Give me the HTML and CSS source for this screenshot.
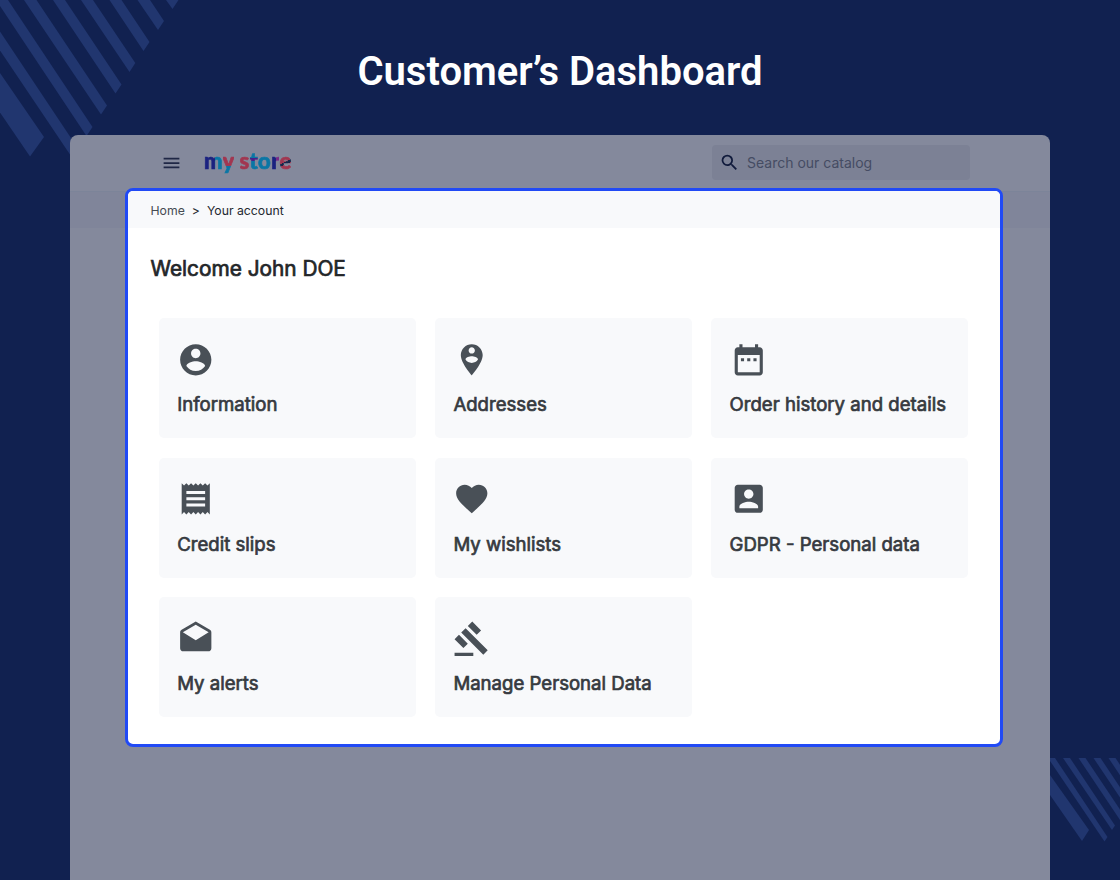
FILE: index.html
```html
<!DOCTYPE html>
<html lang="en">
  <head>
    <meta charset="UTF-8" />
    <meta name="viewport" content="width=device-width, initial-scale=1.0" />
    <title>Customer's Dashboard</title>
    <link rel="stylesheet" href="styles.css">
  </head>
  <body>
    <svg class="stripes stripes-top" width="180" height="160" viewBox="0 0 180 160">
      <path d="M0 73l44 64-14 19.500L0 112.500z" />
      <path d="M0 31.500l78 117-6 9L0 50.500z" />
      <path d="M-4 0H8l84.500 127-6 9z" />
      <path d="M24 0h12.500L107 105.500l-6 9z" />
      <path d="M53 0h12l56.500 84.500-6 9z" />
      <path d="M81 0h12l42.300 63-5.800 9z" />
      <path d="M109.500 0h12l28 42-6 9z" />
      <path d="M137.500 0h12.500l14 21-6 9z" />
      <path d="M166 0h12.500l-6 9z" />
    </svg>
    <svg class="stripes stripes-bottom" width="70" height="84" viewBox="0 0 70 84">
      <path d="M0 17l39 55-7 11L0 37z" />
      <path d="M-2 0h7l52.500 79-3 4.500z" />
      <path d="M13 0h7l45 67.500-3 4.500z" />
      <path d="M28.500 0h7L85 74l-7 0z" />
      <path d="M43.500 0h7L100 74l-7 0z" />
      <path d="M58.500 0h7L115 74l-7 0z" />
    </svg>

    <h1 class="page-title">Customer’s Dashboard</h1>

    <div class="window">
      <header>
        <svg class="menu-icon" viewBox="0 0 24 24"><path d="M3 18h18v-2H3v2zm0-5h18v-2H3v2zm0-7v2h18V6H3z" /></svg>
        <div class="logo"><span class="m">m</span><span class="y">y</span> <span class="s">s</span><span class="t">t</span><span class="o">o</span><span class="r">r</span><span class="e">e</span></div>
        <div class="search">
          <svg viewBox="0 0 24 24"><path d="M15.500 14h-.79l-.28-.27A6.471 6.471 0 0 0 16 9.500 6.500 6.500 0 1 0 9.500 16c1.610 0 3.090-.59 4.230-1.570l.27.28v.79l5 4.990L20.490 19l-4.990-5zm-6 0C7.010 14 5 11.990 5 9.500S7.010 5 9.500 5 14 7.010 14 9.500 11.990 14 9.500 14z" /></svg>
          <span>Search our catalog</span>
        </div>
      </header>
      <div class="band"></div>

      <main class="account">
        <nav class="breadcrumb">
          <a>Home</a>
          <span class="sep">&gt;</span>
          <span>Your account</span>
        </nav>
        <h2>Welcome John DOE</h2>
        <div class="links">
          <a class="card">
            <svg viewBox="0 0 24 24"><path d="M12 2C6.480 2 2 6.480 2 12s4.480 10 10 10 10-4.480 10-10S17.520 2 12 2zm0 3c1.660 0 3 1.340 3 3s-1.340 3-3 3-3-1.340-3-3 1.340-3 3-3zm0 14.200c-2.500 0-4.710-1.280-6-3.220.03-1.990 4-3.080 6-3.080 1.990 0 5.970 1.090 6 3.080-1.290 1.940-3.500 3.220-6 3.220z" /></svg>
            <span>Information</span>
          </a>
          <a class="card">
            <svg viewBox="0 0 24 24"><path d="M12 2C8.140 2 5 5.140 5 9c0 5.250 7 13 7 13s7-7.750 7-13c0-3.860-3.140-7-7-7zm0 2c1.100 0 2 .9 2 2s-.9 2-2 2-2-.9-2-2 .9-2 2-2zm0 10c-1.670 0-3.140-.85-4-2.150.02-1.320 2.670-2.050 4-2.050s3.980.73 4 2.050c-.86 1.300-2.330 2.150-4 2.150z" /></svg>
            <span>Addresses</span>
          </a>
          <a class="card">
            <svg viewBox="0 0 24 24"><path d="M9 11H7v2h2v-2zm4 0h-2v2h2v-2zm4 0h-2v2h2v-2zm2-7h-1V2h-2v2H8V2H6v2H5c-1.110 0-1.990.9-1.990 2L3 20c0 1.100.89 2 2 2h14c1.100 0 2-.9 2-2V6c0-1.100-.9-2-2-2zm0 16H5V9h14v11z" /></svg>
            <span>Order history and details</span>
          </a>
          <a class="card">
            <svg viewBox="0 0 24 24"><path d="M18 17H6v-2h12v2zm0-4H6v-2h12v2zm0-4H6V7h12v2zM3 22l1.500-1.500L6 22l1.500-1.500L9 22l1.500-1.500L12 22l1.500-1.500L15 22l1.500-1.500L18 22l1.500-1.500L21 22V2l-1.500 1.500L18 2l-1.500 1.500L15 2l-1.500 1.500L12 2l-1.500 1.500L9 2 7.500 3.500 6 2 4.500 3.500 3 2v20z" /></svg>
            <span>Credit slips</span>
          </a>
          <a class="card">
            <svg viewBox="0 0 24 24"><path d="M12 21.350l-1.450-1.320C5.400 15.360 2 12.280 2 8.500 2 5.420 4.420 3 7.500 3c1.740 0 3.410.81 4.500 2.090C13.090 3.810 14.760 3 16.500 3 19.580 3 22 5.420 22 8.500c0 3.780-3.400 6.860-8.550 11.540L12 21.350z" /></svg>
            <span>My wishlists</span>
          </a>
          <a class="card">
            <svg viewBox="0 0 24 24"><path d="M3 5v14c0 1.100.89 2 2 2h14c1.100 0 2-.9 2-2V5c0-1.100-.9-2-2-2H5c-1.110 0-2 .9-2 2zm12 4c0 1.660-1.340 3-3 3s-3-1.340-3-3 1.340-3 3-3 3 1.340 3 3zm-9 8c0-2 4-3.100 6-3.100s6 1.100 6 3.100v1H6v-1z" /></svg>
            <span>GDPR - Personal data</span>
          </a>
          <a class="card">
            <svg viewBox="0 0 24 24"><path d="M21.990 8c0-.72-.37-1.350-.94-1.700L12 1 2.950 6.300C2.380 6.650 2 7.280 2 8v10c0 1.100.9 2 2 2h16c1.100 0 2-.9 2-2l-.01-10zM12 13L3.740 7.840 12 3l8.260 4.840L12 13z" /></svg>
            <span>My alerts</span>
          </a>
          <a class="card">
            <svg viewBox="0 0 24 24"><path d="M1 21h12v2H1v-2zM5.245 8.070l2.830-2.827 14.140 14.142-2.828 2.828L5.245 8.070zM12.317 1l5.657 5.656-2.830 2.830-5.654-5.660L12.317 1zM3.825 9.485l5.657 5.657-2.828 2.828-5.657-5.657 2.828-2.828z" /></svg>
            <span>Manage Personal Data</span>
          </a>
        </div>
      </main>
    </div>
  </body>
</html>
```
FILE: styles.css
```css
* {
  box-sizing: border-box;
}
body {
  position: relative;
  height: 880px;
  margin: 0;
  overflow: hidden;
  background-color: #112150;
  font-family: Inter, sans-serif;
}
.stripes {
  position: absolute;
  fill: #21366f;
}
.stripes-top {
  top: 0;
  left: 0;
}
.stripes-bottom {
  top: 758px;
  right: 0;
}
.page-title {
  height: 135px;
  margin: 0;
  padding-top: 48px;
  color: white;
  font-family: Roboto, sans-serif;
  font-size: 40px;
  font-weight: 600;
  line-height: 47px;
  text-align: center;
}
.window {
  position: relative;
  width: 980px;
  height: 745px;
  margin: 0 auto;
  background-color: #84899c;
  border-radius: 8px 8px 0 0;
}
header {
  display: flex;
  align-items: center;
  height: 57px;
  padding: 0 80px 0 91px;
  border-bottom: 1px solid #7c8499;
}
.menu-icon {
  width: 21px;
  height: 22px;
  fill: #1f2745;
}
.logo {
  margin-left: 22px;
  padding-bottom: 5px;
  font-family: Lato, sans-serif;
  font-size: 22px;
  font-weight: 900;
  line-height: 28px;
  letter-spacing: 0.300px;
}
.logo span {
  color: transparent;
  background-clip: text;
  -webkit-background-clip: text;
  -webkit-text-stroke: 0.700px transparent;
}
.logo .m {
  background-image: linear-gradient(90deg, #1b2280 60%, #0a76a5 60%);
}
.logo .y {
  background-image: linear-gradient(180deg, #a13650 70%, #0a76a5 70%);
}
.logo .s {
  background-image: linear-gradient(#a13650, #a13650);
}
.logo .t {
  background-image: linear-gradient(180deg, #0a76a5 42%, #4a2088 42%, #4a2088 52%, #0a76a5 52%);
}
.logo .o {
  background-image: linear-gradient(#0a76a5, #0a76a5);
}
.logo .r {
  background-image: linear-gradient(90deg, #1b2280 60%, #7a2a88 60%);
}
.logo .e {
  background-image: linear-gradient(155deg, #a13650 54%, #16264a 54%, #16264a 62%, #a13650 62%);
}
.search {
  display: flex;
  align-items: center;
  width: 258px;
  height: 35px;
  margin: 0 0 1px auto;
  padding-left: 7px;
  background-color: #7c8195;
  border-radius: 4px;
  color: #454c63;
  font-size: 14px;
}
.search svg {
  width: 21px;
  height: 21px;
  margin-right: 7px;
  fill: #111b3c;
}
.band {
  height: 36px;
  background-color: #80859a;
}
.account {
  width: 878px;
  height: 559px;
  margin: -40px 0 0 55px;
  overflow: hidden;
  background-color: white;
  border: 3px solid #214af5;
  border-radius: 8px;
}
.breadcrumb {
  display: flex;
  align-items: center;
  height: 37px;
  padding: 1px 0 0 22.500px;
  background-color: #f8f9fb;
  color: #232830;
  font-size: 12.250px;
}
.breadcrumb a {
  color: #454b52;
}
.breadcrumb .sep {
  margin: 0 7px;
}
h2 {
  margin: 27px 0 0 22.500px;
  color: #232629;
  font-size: 20.800px;
  font-weight: 400;
  line-height: 28px;
  -webkit-text-stroke: 0.700px;
}
.links {
  display: grid;
  grid-template-columns: repeat(3, 257.200px);
  grid-auto-rows: 120px;
  gap: 19.500px 19px;
  padding: 35px 0 0 30.700px;
}
.card {
  display: flex;
  flex-direction: column;
  padding: 23px 0 0 18.500px;
  background-color: #f8f9fb;
  border-radius: 5px;
  color: #363a3f;
  font-size: 18.600px;
  line-height: 24px;
  -webkit-text-stroke: 0.700px;
}
.card svg {
  width: 37.500px;
  height: 37.500px;
  margin: -0.500px 0 14px;
  fill: #495057;
  stroke: none;
}
```
